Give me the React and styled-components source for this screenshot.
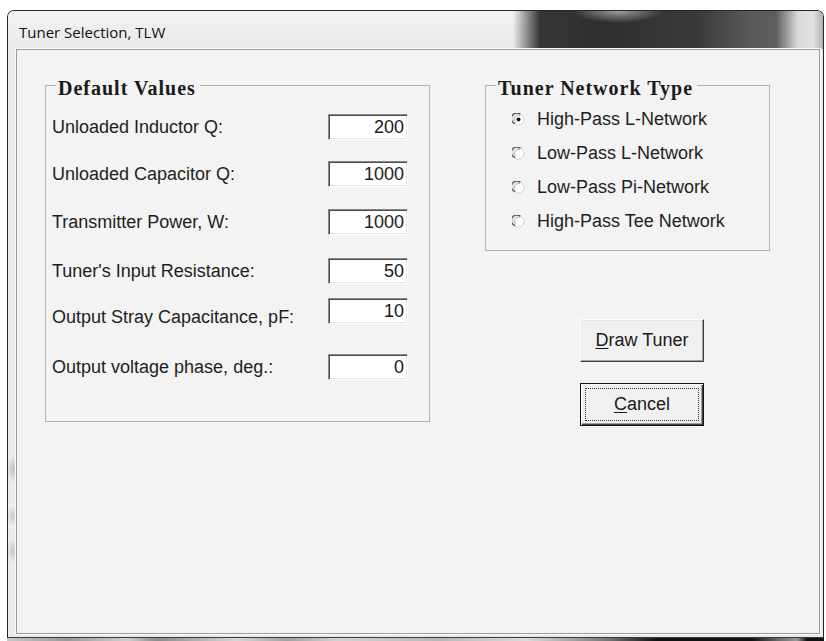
import React from 'react';
import styled, { createGlobalStyle } from 'styled-components';

const SANS = '"Liberation Sans", Arial, sans-serif';
const SERIF = '"Liberation Serif", "Times New Roman", serif';

const GlobalStyle = createGlobalStyle`
  html, body {
    margin: 0;
    padding: 0;
    background: #fff;
  }
  * {
    box-sizing: border-box;
  }
`;

const Page = styled.div`
  width: 826px;
  height: 641px;
  padding: 10px 2px 0 7px;
  display: flex;
  flex-direction: column;
  overflow: hidden;
`;

const Window = styled.div`
  height: 628px;
  display: flex;
  flex-direction: column;
  border: 1px solid #262626;
  border-bottom-color: #3a3a3a;
  border-radius: 7px 7px 0 0;
  overflow: hidden;
  background:
    radial-gradient(ellipse 6px 14px at 5px 458px, rgba(160, 160, 160, 0.55), transparent),
    radial-gradient(ellipse 6px 10px at 5px 505px, rgba(170, 170, 170, 0.5), transparent),
    radial-gradient(ellipse 6px 12px at 5px 540px, rgba(165, 165, 165, 0.5), transparent),
    #ebebeb;
`;

const TitleBar = styled.div`
  height: 38px;
  flex: none;
  display: flex;
  align-items: center;
  padding: 3px 0 0 11px;
  font-family: "Open Sans", "Noto Sans", sans-serif;
  font-size: 15px;
  color: #111;
  background:
    radial-gradient(ellipse 45px 12px at 610px 0px, rgba(170, 170, 170, 0.9), transparent),
    linear-gradient(90deg,
      rgba(0, 0, 0, 0) 0,
      rgba(0, 0, 0, 0) 505px,
      #353535 532px,
      #2e2e2e 600px,
      #3a3a3a 690px,
      #5a5a5a 742px,
      #5e5e5e 768px,
      #dadada 790px,
      #e2e2e2 805px,
      #b0b0b0 815px),
    linear-gradient(180deg, #f2f2f2, #e8e8e8);
`;

const FrameBody = styled.div`
  flex: 1;
  display: flex;
  padding: 0 3px 3px 8px;
`;

const Client = styled.div`
  flex: 1;
  display: flex;
  align-items: flex-start;
  padding: 22px 0 0 28px;
  background: #f2f3f2;
  border: 1px solid #9c9c9c;
  box-shadow: 0 0 0 1px #fafafa;
`;

const Group = styled.fieldset`
  margin: 0;
  padding: 0;
  width: ${(p) => p.$w}px;
  height: ${(p) => p.$h}px;
  border: 1px solid #b2b2b2;
  min-inline-size: 0;
`;

const Legend = styled.legend`
  margin-left: 10px;
  padding: 5px 4px 0 2px;
  font-family: ${SERIF};
  font-weight: bold;
  font-size: 20px;
  line-height: 22px;
  letter-spacing: 1px;
  color: #1a1a1a;
`;

const Fields = styled.div`
  display: flex;
  flex-direction: column;
  padding: 0 21px 0 6px;
`;

const FieldRow = styled.div`
  display: flex;
  align-items: center;
  height: 26px;
  margin-top: ${(p) => p.$top}px;
`;

const FieldLabel = styled.label`
  flex: 1;
  font-family: ${SANS};
  font-size: 18px;
  line-height: 20px;
  color: #1e1e1e;
  padding-top: ${(p) => (p.$low ? 12 : 0)}px;
`;

const ValueBox = styled.input`
  width: 80px;
  height: 26px;
  margin: 0;
  padding: 1px 3px 0 0;
  text-align: right;
  font-family: ${SANS};
  font-size: 18px;
  color: #1a1a1a;
  background: #fff;
  border-style: solid;
  border-width: 1px;
  border-color: #8a8a8a #fdfdfd #fdfdfd #8a8a8a;
  box-shadow: inset 1px 1px 0 #4a4a4a, inset -1px -1px 0 #e4e4e4;
  outline: none;
`;

const RightColumn = styled.div`
  margin-left: 55px;
  display: flex;
  flex-direction: column;
  align-items: flex-start;
`;

const Options = styled.div`
  display: flex;
  flex-direction: column;
  gap: 12px;
  padding: 9px 0 0 26px;
`;

const Option = styled.label`
  display: flex;
  align-items: center;
  gap: 12px;
  height: 22px;
  font-family: ${SANS};
  font-size: 18px;
  color: #1e1e1e;

  svg {
    flex: none;
  }
`;

const Buttons = styled.div`
  display: flex;
  flex-direction: column;
  gap: 21px;
  margin: 68px 0 0 95px;
`;

const Button = styled.button`
  width: 124px;
  height: 43px;
  margin: 0;
  padding: 0;
  position: relative;
  font-family: ${SANS};
  font-size: 18px;
  color: #1a1a1a;
  background: #f0f0f0;
  border-style: solid;
  border-width: 1px;
  border-color: #fdfdfd #404040 #404040 #fdfdfd;
  box-shadow: inset -1px -1px 0 #a0a0a0, inset 1px 1px 0 #e6e6e6;
  ${(p) => p.$default && `
    border: 1px solid #141414;
    box-shadow: inset 1px 1px 0 #fdfdfd, inset -1px -1px 0 #404040, inset -2px -2px 0 #a0a0a0;
  `}
  u {
    text-decoration-thickness: 1px;
    text-underline-offset: 2px;
  }
`;

const FocusRing = styled.span`
  position: absolute;
  inset: 4px;
  border: 1px dotted #333;
  display: flex;
  align-items: center;
  justify-content: center;
`;

const BottomStrip = styled.div`
  height: 3px;
  flex: none;
  background: linear-gradient(90deg,
    #c8c8c8 0, #9a9a9a 60px, #d0d0d0 120px, #8c8c8c 150px, #d8d8d8 230px,
    #a0a0a0 280px, #d4d4d4 330px, #b8b8b8 430px, #dcdcdc 520px,
    #777 600px, #111 650px, #111 745px, #666 770px, #999 790px, #111 800px, #111 826px);
  filter: blur(0.6px);
`;

// classic sunken radio: dark "C" on the upper-left, pale rim elsewhere
const Radio = ({ checked }) => (
  <svg width="13" height="13" viewBox="0 0 13 13">
    <circle cx="6.5" cy="6.5" r="5.5" fill="#fff" stroke="#cfcfcf" strokeWidth="1" />
    <path d="M8.38 1.33 A5.5 5.5 0 1 0 2.96 10.71" fill="none" stroke="#555" strokeWidth="1.3" />
    <path d="M7.9 2.6 A4.2 4.2 0 0 0 3.5 9.4" fill="none" stroke="#a8a8a8" strokeWidth="0.9" />
    {checked && <circle cx="6.5" cy="6.5" r="2" fill="#111" />}
  </svg>
);

const FIELDS = [
  { label: 'Unloaded Inductor Q:', value: '200', top: 15 },
  { label: 'Unloaded Capacitor Q:', value: '1000', top: 21 },
  { label: 'Transmitter Power, W:', value: '1000', top: 22 },
  { label: "Tuner's Input Resistance:", value: '50', top: 23 },
  { label: 'Output Stray Capacitance, pF:', value: '10', top: 14, low: true },
  { label: 'Output voltage phase, deg.:', value: '0', top: 30 },
];

const NETWORKS = [
  'High-Pass L-Network',
  'Low-Pass L-Network',
  'Low-Pass Pi-Network',
  'High-Pass Tee Network',
];

export default function App() {
  return (
    <Page>
      <GlobalStyle />
      <Window>
        <TitleBar>Tuner Selection, TLW</TitleBar>
        <FrameBody>
          <Client>
            <Group $w={385} $h={350}>
              <Legend>Default Values</Legend>
              <Fields>
                {FIELDS.map((f) => (
                  <FieldRow key={f.label} $top={f.top}>
                    <FieldLabel $low={f.low}>{f.label}</FieldLabel>
                    <ValueBox readOnly value={f.value} />
                  </FieldRow>
                ))}
              </Fields>
            </Group>
            <RightColumn>
              <Group $w={285} $h={179}>
                <Legend>Tuner Network Type</Legend>
                <Options>
                  {NETWORKS.map((name, i) => (
                    <Option key={name}>
                      <Radio checked={i === 0} />
                      {name}
                    </Option>
                  ))}
                </Options>
              </Group>
              <Buttons>
                <Button type="button"><u>D</u>raw Tuner</Button>
                <Button type="button" $default>
                  <FocusRing><u>C</u>ancel</FocusRing>
                </Button>
              </Buttons>
            </RightColumn>
          </Client>
        </FrameBody>
      </Window>
      <BottomStrip />
    </Page>
  );
}
